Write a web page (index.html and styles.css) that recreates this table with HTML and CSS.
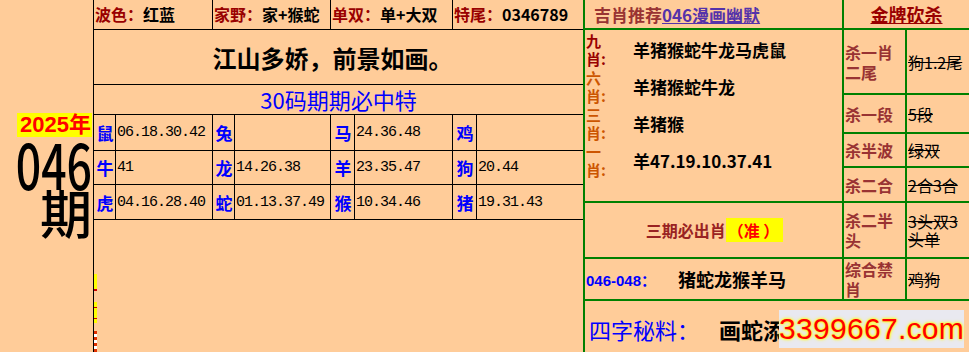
FILE: index.html
```html
<!DOCTYPE html>
<html lang="zh">
<head>
<meta charset="utf-8">
<title>046期</title>
<link rel="stylesheet" href="styles.css">
</head>
<body>
<div class="page">
  <div class="left">
    <div class="year">2025年</div>
    <div class="issue">046</div>
    <div class="qi">期</div>
  </div>

  <div class="mid">
    <div class="toprow">
      <div class="tc"><span class="lbl">波色：</span>红蓝</div>
      <div class="tc"><span class="lbl">家野：</span>家+猴蛇</div>
      <div class="tc"><span class="lbl">单双：</span>单+大双</div>
      <div class="tc"><span class="lbl">特尾：</span>0346789</div>
    </div>
    <div class="slogan">江山多娇，前景如画。</div>
    <div class="title30">30码期期必中特</div>
    <div class="zrow">
      <div class="zc z">鼠</div><div class="zc n">06.18.30.42</div>
      <div class="zc z">兔</div><div class="zc n"></div>
      <div class="zc z">马</div><div class="zc n">24.36.48</div>
      <div class="zc z">鸡</div><div class="zc n"></div>
    </div>
    <div class="zrow">
      <div class="zc z">牛</div><div class="zc n">41</div>
      <div class="zc z">龙</div><div class="zc n">14.26.38</div>
      <div class="zc z">羊</div><div class="zc n">23.35.47</div>
      <div class="zc z">狗</div><div class="zc n">20.44</div>
    </div>
    <div class="zrow">
      <div class="zc z">虎</div><div class="zc n">04.16.28.40</div>
      <div class="zc z">蛇</div><div class="zc n">01.13.37.49</div>
      <div class="zc z">猴</div><div class="zc n">10.34.46</div>
      <div class="zc z">猪</div><div class="zc n">19.31.43</div>
    </div>
    <div class="rest">
      <div class="strip s1"></div>
      <div class="strip s2"></div>
      <div class="strip s3"></div>
    </div>
  </div>

  <div class="right">
    <div class="cell hdr-a"><span class="jx">吉肖推荐</span><a class="lnk" href="#">046漫画幽默</a></div>
    <div class="cell hdr-b"><span class="gold">金牌砍杀</span></div>

    <div class="cell xiao">
      <div class="xi"><div class="xl c9">九<br>肖:</div><div class="xv">羊猪猴蛇牛龙马虎鼠</div></div>
      <div class="xi"><div class="xl c6">六<br>肖:</div><div class="xv">羊猪猴蛇牛龙</div></div>
      <div class="xi"><div class="xl c6">三<br>肖:</div><div class="xv">羊猪猴</div></div>
      <div class="xi"><div class="xl c6">一<br>肖:</div><div class="xv">羊47.19.10.37.41</div></div>
    </div>
    <div class="cell kl">杀一肖二尾</div>
    <div class="cell kv">狗1.2尾</div>
    <div class="cell kl">杀一段</div>
    <div class="cell kv">5段</div>
    <div class="cell kl">杀半波</div>
    <div class="cell kv">绿双</div>
    <div class="cell kl">杀二合</div>
    <div class="cell kv">2合3合</div>

    <div class="cell sanqi"><span class="sq">三期必出肖</span><span class="zhun">（准 ）</span></div>
    <div class="cell kl">杀二半头</div>
    <div class="cell kv">3头双3头单</div>

    <div class="cell range"><span class="rg">046-048：</span><span class="rv">猪蛇龙猴羊马</span></div>
    <div class="cell kl">综合禁肖</div>
    <div class="cell kv">鸡狗</div>

    <div class="cell secret">
      <span class="sl">四字秘料：</span><span class="sv">画蛇添足</span>
      <div class="wm">3399667.com</div>
    </div>
  </div>
</div>
</body>
</html>
```

FILE: styles.css
```css
* { box-sizing: border-box; }
html, body {
  margin: 0;
  padding: 0;
  background: #FFCC99;
}
body {
  width: 969px;
  height: 352px;
  overflow: hidden;
  font-family: "Noto Sans CJK SC", "Noto Sans", sans-serif;
  color: #000;
}
.page {
  display: flex;
  width: 969px;
  height: 352px;
}

/* left column */
.left {
  width: 94px;
  flex: none;
  border-right: 1px solid #000;
  display: flex;
  flex-direction: column;
  align-items: flex-end;
  padding-top: 113px;
  padding-right: 1px;
}
.year {
  background: #FFFF00;
  color: #FF0000;
  font-family: "Liberation Sans", "Noto Sans CJK SC", sans-serif;
  font-weight: bold;
  font-size: 22px;
  line-height: 24px;
  padding: 0 1px 0 3px;
}
.issue {
  font-family: "Noto Sans CJK SC", sans-serif;
  font-weight: 500;
  font-size: 62px;
  line-height: 48px;
  margin-top: 2px;
  transform: scaleX(0.72);
  transform-origin: right center;
}
.qi {
  font-size: 52px;
  line-height: 44px;
  margin-top: 3px;
  font-weight: 500;
}

/* middle */
.mid {
  width: 489px;
  flex: none;
  display: flex;
  flex-direction: column;
}
.toprow {
  display: grid;
  grid-template-columns: 119px 118px 122px 130px;
  height: 30px;
  border-bottom: 1px solid #000;
}
.tc {
  border-right: 1px solid #000;
  font-size: 16px;
  font-weight: bold;
  line-height: 29px;
  padding-left: 1px;
  white-space: nowrap;
}
.tc:last-child { border-right: none; }
.lbl { color: #990000; }

.slogan {
  height: 56px;
  border-bottom: 1px solid #000;
  display: flex;
  align-items: center;
  justify-content: center;
  font-size: 24px;
  font-weight: bold;
  padding-right: 12px;
}
.title30 {
  height: 30px;
  border-bottom: 1px solid #000;
  color: #0000FF;
  font-size: 22px;
  line-height: 29px;
  text-align: center;
}
.zrow {
  display: grid;
  grid-template-columns: 22px 97px 22px 96px 24px 98px 24px 106px;
  height: 35px;
  border-bottom: 1px solid #000;
}
.zrow:nth-of-type(4) { height: 36px; }
.zc {
  border-right: 1px solid #000;
  display: flex;
  align-items: center;
}
.zc:last-child { border-right: none; }
.z {
  color: #0000FF;
  font-weight: bold;
  font-size: 17px;
  justify-content: center;
  padding-left: 1px;
}
.n {
  font-family: "Liberation Mono", monospace;
  font-size: 15px;
  letter-spacing: -1px;
  padding-left: 1px;
}
.rest {
  flex: 1;
  padding-top: 54px;
}
.strip { width: 3px; }
.s1 { height: 17px; background: #FFFF00; border-bottom: 2px solid #CC0000; }
.s2 { height: 21px; margin-top: 11px; background: linear-gradient(#FFFF00 0 5px, #CC0000 5px 6px, #FFFF00 6px 16px, #CC0000 16px 17px, #FFFF00 17px); }
.s3 { height: 21px; margin-top: 8px; background: repeating-linear-gradient(#E03000 0 3px, #FFFFFF 3px 6px); }

/* right */
.right {
  width: 386px;
  flex: none;
  display: grid;
  grid-template-columns: 257px 61px 62px;
  grid-template-rows: 28px 63px 37px 32px 33px 54px 40px 51px;
  gap: 2px;
  padding-left: 2px;
  background: #008000;
}
.cell {
  background: #FFCC99;
  min-width: 0;
}
.hdr-a {
  display: flex;
  align-items: center;
  padding-left: 9px;
  font-size: 17px;
  font-weight: bold;
  white-space: nowrap;
}
.jx { color: #993333; }
.lnk { color: #5533AA; text-decoration: underline; }
.hdr-b {
  grid-column: 2 / 4;
  display: flex;
  align-items: center;
  justify-content: center;
}
.gold {
  color: #990000;
  font-size: 18px;
  font-weight: bold;
  text-decoration: underline;
}
.xiao {
  grid-row: 2 / 6;
  padding-top: 1px;
}
.xi {
  display: flex;
  align-items: center;
  height: 37px;
}
.xl {
  width: 48px;
  flex: none;
  font-size: 15px;
  line-height: 18px;
  font-weight: bold;
  padding-left: 1px;
}
.c9 { color: #990000; }
.c6 { color: #CC5500; }
.xv {
  font-size: 17px;
  font-weight: bold;
  white-space: nowrap;
}
.kl {
  display: flex;
  align-items: center;
  color: #993333;
  font-size: 16px;
  font-weight: bold;
  line-height: 20px;
  padding-left: 1px;
}
.kv {
  display: flex;
  align-items: center;
  font-size: 16px;
  line-height: 18px;
  text-decoration: line-through;
  padding-left: 1px;
}
.sanqi {
  display: flex;
  align-items: center;
  justify-content: center;
  font-size: 16px;
  font-weight: bold;
  padding-left: 2px;
}
.sq { color: #992222; }
.zhun { color: #FF0000; background: #FFFF00; padding: 0 4px 0 2px; }
.range {
  display: flex;
  align-items: center;
  padding-left: 1px;
  white-space: nowrap;
}
.rg {
  color: #0000FF;
  font-family: "Liberation Sans", "Noto Sans CJK SC", sans-serif;
  font-weight: bold;
  font-size: 15px;
}
.rv {
  font-size: 18px;
  font-weight: bold;
  margin-left: 22px;
}
.secret {
  grid-column: 1 / 4;
  position: relative;
  display: flex;
  align-items: center;
  padding-left: 4px;
  padding-top: 4px;
  white-space: nowrap;
}
.sl {
  color: #0000FF;
  font-size: 22px;
}
.sv {
  font-size: 22px;
  font-weight: bold;
  margin-left: 20px;
}
.wm {
  position: absolute;
  left: 194px;
  top: 9px;
  width: 185px;
  height: 38px;
  background: #E9E9F0;
  color: #FF0000;
  font-family: "Liberation Sans", sans-serif;
  font-size: 30px;
  line-height: 38px;
  text-align: center;
  text-shadow: 0 0 2px #FFFF00, 0 0 3px #FFFF00, 0 0 4px #FFFF66;
  letter-spacing: 0.3px;
}
```
